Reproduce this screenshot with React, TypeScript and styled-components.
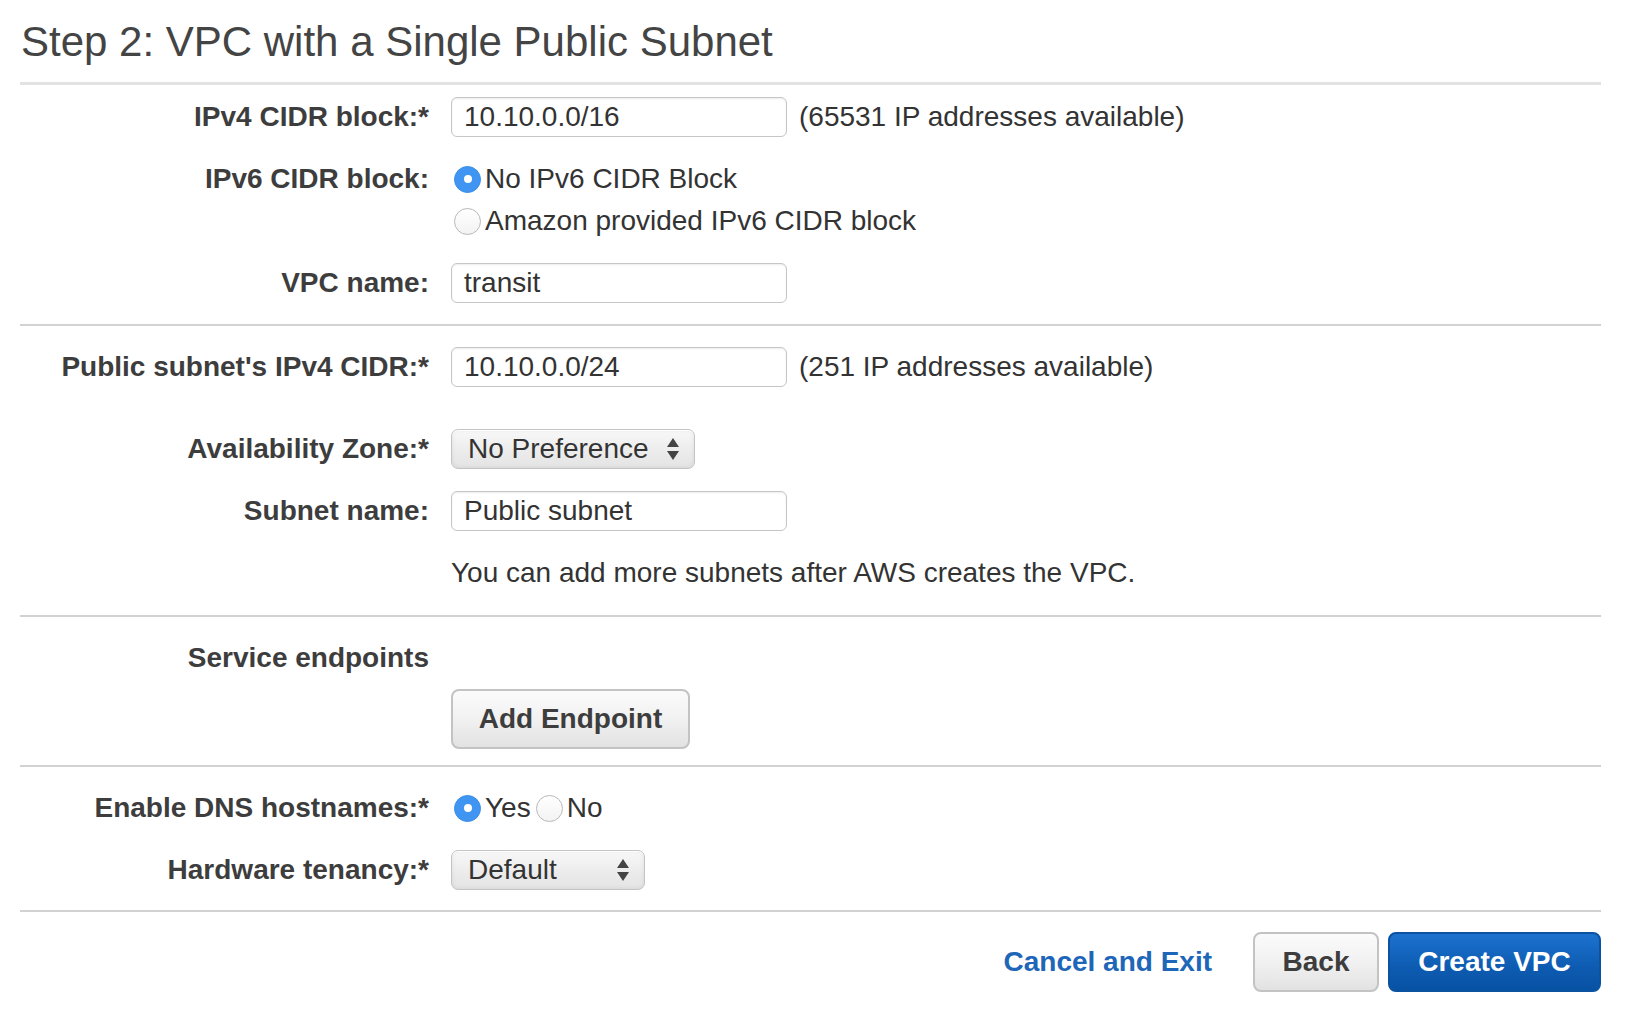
import * as React from 'react'
import styled, { createGlobalStyle, css } from 'styled-components'

const GlobalStyle = createGlobalStyle`
  html, body {
    margin: 0;
    padding: 0;
    background: #ffffff;
  }
  body {
    font-family: 'Liberation Sans', Arial, Helvetica, sans-serif;
    color: #444444;
  }
`

const Page = styled.div`
  width: 1632px;
  padding: 0 31px 0 20px;
  box-sizing: border-box;
`

const Title = styled.h1`
  margin: 0;
  padding: 18px 0 16px 1px;
  font-size: 42px;
  line-height: 48px;
  font-weight: normal;
  color: #444444;
  border-bottom: 3px solid #e3e3e3;
`

const Section = styled.div<{ padTop?: number; padBottom?: number; gap?: number }>`
  display: flex;
  flex-direction: column;
  gap: ${p => p.gap ?? 22}px;
  padding-top: ${p => p.padTop ?? 12}px;
  padding-bottom: ${p => p.padBottom ?? 21}px;
  border-bottom: 2px solid #d2d2d2;
`

const Row = styled.div<{ extraBottom?: number; top?: boolean }>`
  display: grid;
  grid-template-columns: 409px auto;
  column-gap: 22px;
  align-items: ${p => (p.top ? 'start' : 'center')};
  min-height: 40px;
  margin-bottom: ${p => p.extraBottom ?? 0}px;
`

const Label = styled.div`
  text-align: right;
  font-size: 28px;
  font-weight: bold;
  color: #3d3d3d;
  line-height: 40px;
  white-space: nowrap;
`

const Field = styled.div`
  display: flex;
  align-items: center;
  gap: 12px;
  font-size: 28px;
  line-height: 40px;
`

const TextBox = styled.div`
  width: 336px;
  height: 40px;
  box-sizing: border-box;
  padding: 0 12px;
  border: 1.5px solid #c6c6c6;
  border-radius: 6px;
  box-shadow: inset 0 1px 2px rgba(0, 0, 0, 0.08);
  background: #ffffff;
  font-size: 28px;
  line-height: 37px;
  color: #333333;
`

const Hint = styled.span`
  font-size: 28px;
  color: #333333;
`

const HelpText = styled.div`
  grid-column: 2;
  font-size: 28px;
  line-height: 40px;
  color: #333333;
`

const RadioList = styled.div`
  display: flex;
  flex-direction: column;
  gap: 2px;
`

const RadioInline = styled.div`
  display: flex;
  align-items: center;
  gap: 2px;
`

const RadioOption = styled.div`
  display: flex;
  align-items: center;
  gap: 4px;
  height: 40px;
  font-size: 28px;
  color: #333333;
  padding-left: 3px;
`

const RadioDot = styled.span<{ checked?: boolean }>`
  position: relative;
  width: 27px;
  height: 27px;
  border-radius: 50%;
  box-sizing: border-box;
  flex: none;
  ${p =>
    p.checked
      ? css`
          background: #3f95f1;
          border: 1px solid #3a8de6;
          &::after {
            content: '';
            position: absolute;
            left: 50%;
            top: 50%;
            width: 8px;
            height: 8px;
            margin: -4px 0 0 -4px;
            border-radius: 50%;
            background: #ffffff;
          }
        `
      : css`
          background: linear-gradient(#ffffff, #f3f3f3);
          border: 1.5px solid #b8b8b8;
        `}
`

const SelectBox = styled.div<{ width: number }>`
  width: ${p => p.width}px;
  height: 40px;
  box-sizing: border-box;
  display: flex;
  align-items: center;
  justify-content: space-between;
  padding: 0 14px 0 16px;
  border: 1.5px solid #c4c4c4;
  border-radius: 7px;
  background: linear-gradient(#f8f8f8, #ececec 55%, #e4e4e4);
  box-shadow: inset 0 1px 0 #ffffff, inset 0 0 4px rgba(0, 0, 0, 0.08);
  font-size: 28px;
  color: #333333;
`

const Arrows = styled.svg`
  flex: none;
`

const GrayButton = styled.button<{ w: number }>`
  width: ${p => p.w}px;
  height: 60px;
  box-sizing: border-box;
  border: 2px solid #c3c3c3;
  border-radius: 8px;
  background: linear-gradient(#fbfbfb, #f1f1f1 50%, #e2e2e2);
  font-family: inherit;
  font-size: 28px;
  font-weight: bold;
  color: #3d3d3d;
  padding: 0;
  cursor: pointer;
`

const PrimaryButton = styled.button`
  width: 213px;
  height: 60px;
  box-sizing: border-box;
  border: 2px solid #0b52a0;
  border-radius: 8px;
  background: linear-gradient(#1c72cf, #0d5bb1 60%, #0852a4);
  font-family: inherit;
  font-size: 28px;
  font-weight: bold;
  color: #ffffff;
  padding: 0;
  cursor: pointer;
`

const Footer = styled.div`
  display: flex;
  justify-content: flex-end;
  align-items: center;
  gap: 9px;
  padding-top: 20px;
`

const CancelLink = styled.a`
  font-size: 28px;
  font-weight: bold;
  color: #1d66b8;
  text-decoration: none;
  margin-right: 32px;
  cursor: pointer;
`

const SelectArrows = () => (
  <Arrows width="14" height="26" viewBox="0 0 14 26">
    <path d="M7 2 L13 11 L1 11 Z" fill="#444" />
    <path d="M7 24 L13 15 L1 15 Z" fill="#444" />
  </Arrows>
)

const Select: React.FC<{ value: string; width: number }> = ({ value, width }) => (
  <SelectBox width={width}>
    <span>{value}</span>
    <SelectArrows />
  </SelectBox>
)

const Radio: React.FC<{ label: string; checked?: boolean }> = ({ label, checked }) => (
  <RadioOption>
    <RadioDot checked={checked} />
    <span>{label}</span>
  </RadioOption>
)

export default function App() {
  return (
    <Page>
      <GlobalStyle />
      <Title>Step 2: VPC with a Single Public Subnet</Title>

      <Section padTop={12} padBottom={21}>
        <Row>
          <Label>IPv4 CIDR block:*</Label>
          <Field>
            <TextBox>10.10.0.0/16</TextBox>
            <Hint>(65531 IP addresses available)</Hint>
          </Field>
        </Row>
        <Row top>
          <Label>IPv6 CIDR block:</Label>
          <RadioList>
            <Radio label="No IPv6 CIDR Block" checked />
            <Radio label="Amazon provided IPv6 CIDR block" />
          </RadioList>
        </Row>
        <Row>
          <Label>VPC name:</Label>
          <Field>
            <TextBox>transit</TextBox>
          </Field>
        </Row>
      </Section>

      <Section padTop={21} padBottom={22}>
        <Row extraBottom={20}>
          <Label>Public subnet's IPv4 CIDR:*</Label>
          <Field>
            <TextBox>10.10.0.0/24</TextBox>
            <Hint>(251 IP addresses available)</Hint>
          </Field>
        </Row>
        <Row>
          <Label>Availability Zone:*</Label>
          <Field>
            <Select value="No Preference" width={244} />
          </Field>
        </Row>
        <Row>
          <Label>Subnet name:</Label>
          <Field>
            <TextBox>Public subnet</TextBox>
          </Field>
        </Row>
        <Row>
          <HelpText>You can add more subnets after AWS creates the VPC.</HelpText>
        </Row>
      </Section>

      <Section padTop={21} padBottom={16} gap={11}>
        <Row>
          <Label>Service endpoints</Label>
        </Row>
        <Row>
          <span />
          <Field>
            <GrayButton w={239}>Add Endpoint</GrayButton>
          </Field>
        </Row>
      </Section>

      <Section padTop={21} padBottom={20}>
        <Row>
          <Label>Enable DNS hostnames:*</Label>
          <RadioInline>
            <Radio label="Yes" checked />
            <Radio label="No" />
          </RadioInline>
        </Row>
        <Row>
          <Label>Hardware tenancy:*</Label>
          <Field>
            <Select value="Default" width={194} />
          </Field>
        </Row>
      </Section>

      <Footer>
        <CancelLink>Cancel and Exit</CancelLink>
        <GrayButton w={126}>Back</GrayButton>
        <PrimaryButton>Create VPC</PrimaryButton>
      </Footer>
    </Page>
  )
}
